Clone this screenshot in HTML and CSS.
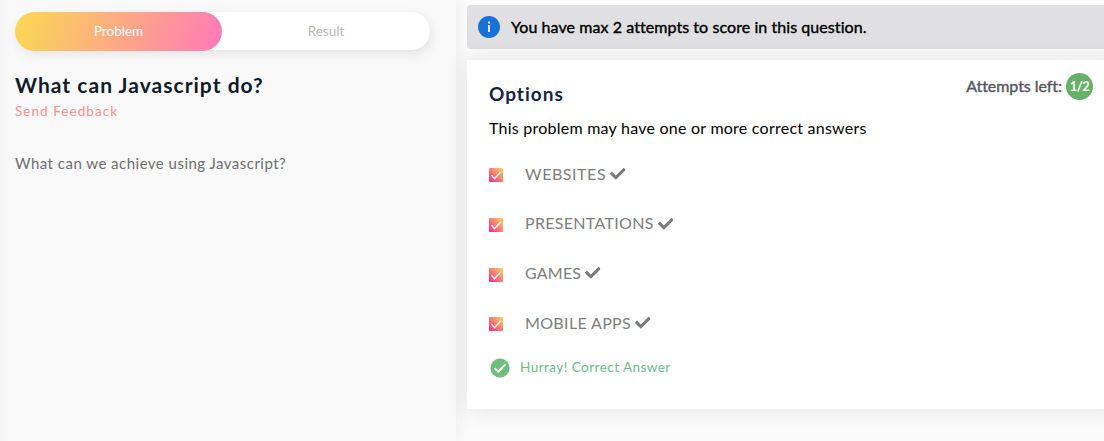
FILE: index.html
```html
<!DOCTYPE html>
<html lang="en">
<head>
<meta charset="utf-8">
<title>What can Javascript do?</title>
<link rel="stylesheet" href="styles.css">
</head>
<body>
<svg class="sprite" aria-hidden="true">
  <symbol id="check" viewBox="0 0 512 512"><path d="M173.898 439.404l-166.4-166.4c-9.997-9.997-9.997-26.206 0-36.204l36.203-36.204c9.997-9.998 26.207-9.998 36.204 0L192 312.69 432.095 72.596c9.997-9.997 26.207-9.997 36.204 0l36.203 36.204c9.997 9.997 9.997 26.206 0 36.204l-294.4 294.401c-9.998 9.997-26.207 9.997-36.204-.001z"/></symbol>
</svg>
<div class="page">
  <aside class="problem">
    <nav class="tabs">
      <a class="tab tab-active">Problem</a>
      <a class="tab">Result</a>
    </nav>
    <h1 class="title">What can Javascript do?</h1>
    <a class="feedback">Send Feedback</a>
    <p class="statement">What can we achieve using Javascript?</p>
  </aside>
  <main class="answer">
    <div class="notice">
      <svg class="info" viewBox="0 0 22 22"><circle cx="11" cy="11" r="11" fill="#1872d6"/><path d="M10 9h2v7h-2zM10 5.4h2v2h-2z" fill="#dfe6ee"/></svg>
      <span class="notice-text">You have max 2 attempts to score in this question.</span>
    </div>
    <section class="card">
      <header class="card-head">
        <h2 class="card-title">Options</h2>
        <div class="attempts"><span class="attempts-label">Attempts left:</span><span class="count">1/2</span></div>
      </header>
      <p class="hint">This problem may have one or more correct answers</p>
      <ul class="options">
        <li class="option"><span class="box"><svg viewBox="0 0 14 14"><path d="M2.5 7.3 5.5 10.7 11.7 4"/></svg></span><span class="name websites">WEBSITES</span><svg class="tick"><use href="#check"/></svg></li>
        <li class="option"><span class="box"><svg viewBox="0 0 14 14"><path d="M2.5 7.3 5.5 10.7 11.7 4"/></svg></span><span class="name presentations">PRESENTATIONS</span><svg class="tick"><use href="#check"/></svg></li>
        <li class="option"><span class="box"><svg viewBox="0 0 14 14"><path d="M2.5 7.3 5.5 10.7 11.7 4"/></svg></span><span class="name games">GAMES</span><svg class="tick"><use href="#check"/></svg></li>
        <li class="option"><span class="box"><svg viewBox="0 0 14 14"><path d="M2.5 7.3 5.5 10.7 11.7 4"/></svg></span><span class="name apps">MOBILE APPS</span><svg class="tick"><use href="#check"/></svg></li>
      </ul>
      <div class="verdict">
        <svg class="ok" viewBox="0 0 20 20"><circle cx="10" cy="10" r="9.5" fill="#6dbd7b"/><path d="M4.6 10.2 8.3 13.8 15.4 6.4" fill="none" stroke="#fff" stroke-width="2"/></svg>
        <span class="verdict-text">Hurray! Correct Answer</span>
      </div>
    </section>
  </main>
</div>
</body>
</html>
```
FILE: styles.css
```css
* { box-sizing: border-box; }
body { margin: 0; font-family: Lato, "Open Sans", sans-serif; background: #fbfbfb; overflow: hidden; }
h1, h2, p, ul { margin: 0; padding: 0; }
.sprite { display: none; }
.page { display: flex; width: 1104px; height: 441px; overflow: hidden; }

.problem {
  position: relative;
  z-index: 1;
  flex: none;
  width: 456px;
  padding: 12px 26px 0 15px;
  background: linear-gradient(90deg, #f4f4f4 0, #f9f9f9 10px);
  box-shadow: 0 0 16px rgba(0, 0, 0, .08);
}
.tabs { display: flex; height: 38px; border-radius: 19px; background: #fff; box-shadow: 2px 4px 12px rgba(0, 0, 0, .09); }
.tab { flex: 1; height: 38px; line-height: 38px; text-align: center; font-size: 13.5px; color: #b8b8b8; }
.tab-active { flex: none; width: 207px; height: 39px; border-radius: 20px; color: #fff; background: linear-gradient(110deg, #fada51 0%, #ff7eb3 95%); }
.title { margin-top: 22px; line-height: 26px; font-size: 21px; font-weight: 700; letter-spacing: 1.03px; color: #101a29; white-space: nowrap; }
.feedback { display: block; margin-top: 3px; line-height: 20px; font-size: 13.5px; letter-spacing: 1.05px; color: #fc8f91; }
.statement { margin-top: 32px; line-height: 20px; font-size: 15px; letter-spacing: .48px; color: #6e6e6e; }

.answer { flex: none; width: 648px; padding: 5px 0 0 11px; }
.notice { position: relative; z-index: 2; display: flex; align-items: center; height: 44px; padding-left: 11px; border-radius: 4px 0 0 4px; background: #e0e0e2; }
.info { width: 22px; height: 22px; }
.notice-text { margin: -1px 0 0 11px; font-size: 16px; letter-spacing: .07px; color: #000; -webkit-text-stroke: .4px #000; }
.card { position: relative; z-index: 2; height: 349px; margin: 11px -20px 0 0; padding: 13px 31px 0 22px; background: #fff; box-shadow: 0 0 22px rgba(0, 0, 0, .1); }
.card-head { display: flex; justify-content: space-between; height: 42px; }
.card-title { padding-top: 8px; line-height: 26px; font-size: 19px; letter-spacing: 1px; color: #172344; }
.attempts { display: flex; height: 27px; line-height: 25px; }
.attempts-label { font-size: 16px; letter-spacing: -.05px; color: #55555d; -webkit-text-stroke: .4px #55555d; }
.count { width: 27px; height: 27px; margin-left: 4px; border-radius: 50%; line-height: 27px; text-align: center; font-size: 13px; font-weight: 700; letter-spacing: -.6px; color: #fff; background: #65b168; }
.hint { margin-top: 2px; line-height: 22px; font-size: 16px; letter-spacing: .24px; color: #000; }
.options { margin-top: 10.6px; list-style: none; }
.option { display: flex; align-items: center; height: 49.6px; }
.box { display: flex; width: 14px; height: 14px; margin-top: 2px; border-radius: 1px; background: linear-gradient(45deg, #fb2584, #fdd662); }
.box svg { width: 14px; height: 14px; fill: none; stroke: #fff; stroke-width: 1.4; }
.name { margin: -2px 0 0 22px; font-size: 16px; color: #7d7d7d; }
.websites { letter-spacing: .56px; }
.presentations { letter-spacing: .31px; }
.games { letter-spacing: .2px; }
.apps { letter-spacing: .35px; }
.tick { width: 15.5px; height: 15.5px; margin: -1px 0 0 4px; fill: #7b7b7b; }
.verdict { display: flex; align-items: center; height: 20px; margin-top: 10px; padding-left: 1px; }
.ok { width: 20px; height: 20px; }
.verdict-text { margin: -1px 0 0 10px; font-size: 13.5px; letter-spacing: .46px; color: #6dbd8b; }
```
